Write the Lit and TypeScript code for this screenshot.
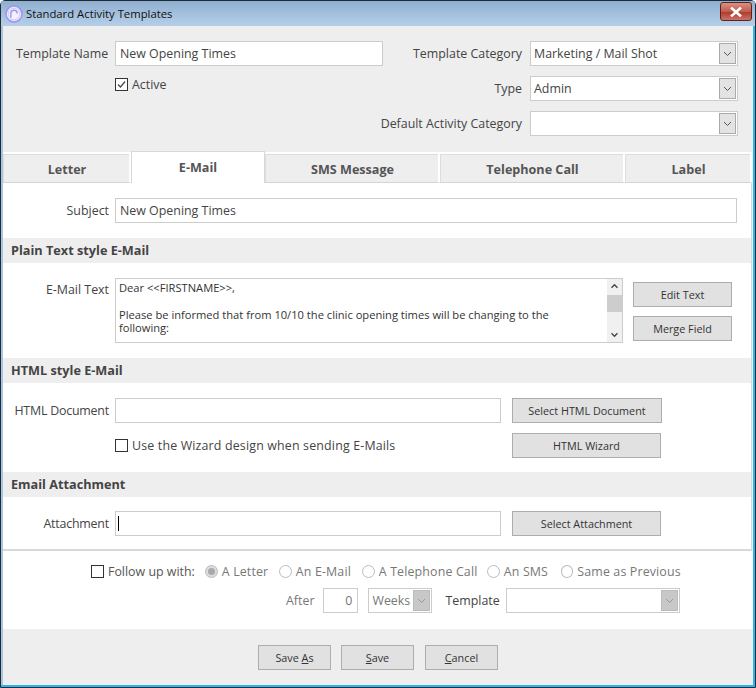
import { LitElement, html, css, svg } from 'lit';
import { customElement } from 'lit/decorators.js';

const CHEVRON = svg`<path d="M3 5l3.5 3.5L10 5" fill="none" stroke="currentColor" stroke-width="1"/>`;
const TABS = [
  { label: 'Letter', width: 128 },
  { label: 'E-Mail', width: 134, active: true },
  { label: 'SMS Message', width: 175 },
  { label: 'Telephone Call', width: 185 },
  { label: 'Label', width: 127 },
];
// width runs from one radio's dot to the next one
const RADIOS = [
  { label: 'A Letter', width: 74 },
  { label: 'An E-Mail', width: 83 },
  { label: 'A Telephone Call', width: 125 },
  { label: 'An SMS', width: 74 },
  { label: 'Same as Previous', width: 120 },
];

@customElement('app-root')
export class AppRoot extends LitElement {
  static override styles = css`
    :host {
      display: block;
      width: 756px;
      height: 688px;
      font-family: 'Open Sans', 'Noto Sans', sans-serif;
      font-size: 12.4px;
      color: #444;
      overflow: hidden;
    }
    * { box-sizing: border-box; }
    .window {
      width: 756px;
      height: 688px;
      display: flex;
      flex-direction: column;
      background:
        linear-gradient(#2bb5e8, #2bb5e8) bottom / 100% 2px no-repeat,
        linear-gradient(to right, #a8c6e4 50%, #2bb5e8 99%);
      border: 1px solid #1f2c36;
      border-radius: 5px 5px 0 0;
    }
    .titlebar {
      height: 25px;
      flex: none;
      display: flex;
      align-items: center;
      padding: 0 3px 0 4px;
      gap: 3px;
      font-size: 11.3px;
      color: #111;
      background: linear-gradient(#8fafd0, #b6cfe8);
    }
    .close {
      margin-left: auto;
      width: 32px;
      height: 19px;
      margin-top: -4px;
      border: 1px solid #5e2320;
      border-radius: 3px;
      background: linear-gradient(#d89187, #c25b4c 50%, #b13c2a 55%, #c9736a);
      display: flex;
      align-items: center;
      justify-content: center;
    }
    .client {
      flex: 1;
      margin: 0 2px 2px 2px;
      background: #eee;
      border-bottom: 1px solid #e6f3fa;
      display: flex;
      flex-direction: column;
      min-height: 0;
    }
    .top {
      height: 126px;
      flex: none;
      display: flex;
      padding: 15px 0 0 13px;
    }
    .top-left { width: 362px; }
    .top-right { display: flex; flex-direction: column; gap: 10px; }
    .row { display: flex; align-items: center; }
    .lbl { text-align: right; white-space: nowrap; }
    .top-left .lbl { width: 92px; margin-right: 7px; }
    .top-right .row { justify-content: flex-end; width: 360px; }
    .top-right .lbl { margin-right: 8px; }
    .active-row { margin: 10px 0 0 99px; }
    .input {
      height: 25px;
      flex: none;
      background: #fff;
      border: 1px solid #ccc;
      padding: 0 4px;
      display: flex;
      align-items: center;
      white-space: nowrap;
    }
    .select {
      height: 25px;
      width: 208px;
      flex: none;
      background: #fff;
      border: 1px solid #ccc;
      padding: 0 1px 0 3px;
      display: flex;
      align-items: center;
      justify-content: space-between;
    }
    .arrow {
      width: 17px;
      height: 21px;
      background: #e3e3e3;
      border: 1px solid #aaa;
      color: #555;
      display: flex;
      align-items: center;
      justify-content: center;
      flex: none;
    }
    .check {
      width: 13px;
      height: 13px;
      background: #fff;
      border: 1px solid #333;
      margin-right: 4px;
      flex: none;
      display: block;
    }
    .tabs { display: flex; height: 31px; flex: none; margin-right: 1px; }
    .tab {
      display: flex;
      align-items: center;
      justify-content: center;
      padding: 2px 0 0 2px;
      font-weight: 700;
      font-size: 12.6px;
      color: #555;
      border-top: 2px solid #fff;
      border-right: 2px solid #fff;
      border-bottom: 1px solid #d4d4d4;
      background: #eee;
      box-shadow: inset 1px 1px 0 #ddd;
    }
    .tab.active {
      background: #fff;
      margin-top: -1px;
      height: 32px;
      border: 1px solid #d8d8d8;
      border-bottom: 0;
      padding: 0 0 1px;
      box-shadow: none;
    }
    .panel {
      height: 368px;
      flex: none;
      background: #fff;
      border-bottom: 2px solid #d8d8d8;
      border-right: 1px solid #d8d8d8;
      padding-top: 15px;
      margin-right: 1px;
    }
    .panel .lbl { width: 106px; margin-right: 6px; flex: none; }
    .tight { letter-spacing: -.2px; }
    .section {
      height: 25px;
      background: #eee;
      padding: 0 0 2px 8px;
      display: flex;
      align-items: center;
      font-weight: 700;
      font-size: 12.7px;
      color: #444;
    }
    .text-row { display: flex; margin-top: 15px; }
    .text-row .lbl { padding-top: 3px; }
    .memo {
      width: 508px;
      height: 65px;
      flex: none;
      border: 1px solid #ccc;
      display: flex;
      font-size: 11.15px;
      line-height: 13.4px;
      color: #333;
    }
    .memo-text { flex: 1; padding: 2px 3px; white-space: pre-wrap; overflow: hidden; }
    .scroll {
      width: 15px;
      flex: none;
      background: #f0f0f0;
      display: flex;
      flex-direction: column;
      align-items: center;
      color: #444;
    }
    .scroll i { display: block; width: 15px; height: 17px; background: #cdcdcd; margin: 1px 0 auto; }
    .scroll svg { flex: none; margin: 1px 0; }
    .side { display: flex; flex-direction: column; gap: 9px; margin: 4px 0 0 10px; }
    .btn {
      height: 25px;
      background: #e1e1e1;
      border: 1px solid #adadad;
      display: flex;
      align-items: center;
      justify-content: center;
      font-size: 10.8px;
      color: #333;
      white-space: nowrap;
      flex: none;
    }
    .btn u { text-underline-offset: 1px; }
    .html-row { margin-top: 15px; }
    .attach-row { margin-top: 14px; }
    .wide { width: 386px; }
    .ml { margin-left: 11px; }
    .wiz { margin-top: 10px; height: 25px; }
    .wiz .spacer { width: 112px; flex: none; }
    .wiz .pad { width: 386px; flex: none; display: flex; align-items: center; letter-spacing: .17px; }
    .caret { width: 1px; height: 15px; background: #000; margin-left: -2px; }
    .follow {
      height: 78px;
      flex: none;
      background: #fff;
      padding-top: 12px;
    }
    .f1 { padding-left: 88px; height: 16px; color: #555; }
    .f1 .fu { margin-right: 10px; }
    .radio { display: flex; align-items: center; flex: none; color: #777; white-space: nowrap; letter-spacing: .15px; }
    .dot {
      width: 13px;
      height: 13px;
      border-radius: 50%;
      background: #fff;
      border: 1px solid #bbb;
      margin-right: 4px;
      display: flex;
      align-items: center;
      justify-content: center;
    }
    .dot.on { background: #ddd; }
    .dot.on::after { content: ''; width: 7px; height: 7px; border-radius: 50%; background: #a9a9a9; }
    .f2 { margin-top: 9px; padding-left: 283px; height: 25px; }
    .muted { color: #777; }
    .num {
      width: 35px;
      height: 25px;
      margin-left: 9px;
      border: 1px solid #ccc;
      background: #fff;
      color: #777;
      display: flex;
      align-items: center;
      justify-content: flex-end;
      padding-right: 5px;
    }
    .sel-off {
      height: 25px;
      margin-left: 10px;
      border: 1px solid #ccc;
      background: #fff;
      display: flex;
      align-items: center;
      justify-content: space-between;
      padding: 0 1px 0 3px;
      color: #777;
    }
    .sel-off .arrow { background: #c8c8c8; border-color: #bbb; color: #999; }
    .weeks { width: 64px; }
    .tpl-lbl { margin-left: 13px; }
    .tpl { width: 174px; margin-left: 6px; }
    .foot {
      flex: 1;
      display: flex;
      gap: 10px;
      padding: 16px 0 0 255px;
    }
    .foot .btn { width: 73px; }
    .foot .btn:last-child { margin-left: 1px; }
  `;

  private arrow() {
    return html`<span class="arrow"><svg width="13" height="13" viewBox="0 0 13 13">${CHEVRON}</svg></span>`;
  }

  private select(value: string) {
    return html`<div class="select"><span>${value}</span>${this.arrow()}</div>`;
  }

  private checkbox(checked = false) {
    return html`<svg class="check" viewBox="0 0 11 11" width="13" height="13">
      ${checked ? svg`<path d="M2 5.5l2.5 2.5L9 2.5" fill="none" stroke="#444" stroke-width="1.2"/>` : ''}
    </svg>`;
  }

  override render() {
    return html`
      <div class="window">
        <div class="titlebar">
          <svg width="18" height="18" viewBox="0 0 17 17">
            <circle cx="8.5" cy="8.5" r="7.5" fill="#f2efff" stroke="#9d94f0" stroke-width="1.4"/>
            <path d="M5.5 12V8a3 3 0 0 1 6 0" fill="none" stroke="#9d94f0" stroke-width="1.3"/>
            <circle cx="8.5" cy="8.5" r="5.5" fill="none" stroke="#c9c4f7" stroke-width=".8"/>
          </svg>
          <span>Standard Activity Templates</span>
          <div class="close">
            <svg width="12" height="10" viewBox="0 0 12 10">
              <path d="M2 1.5l8 7M10 1.5l-8 7" stroke="#fff" stroke-width="2.6" stroke-linecap="square"/>
            </svg>
          </div>
        </div>
        <div class="client">
          <div class="top">
            <div class="top-left">
              <div class="row">
                <span class="lbl">Template Name</span>
                <div class="input" style="width:268px">New Opening Times</div>
              </div>
              <div class="row active-row">${this.checkbox(true)}<span>Active</span></div>
            </div>
            <div class="top-right">
              <div class="row"><span class="lbl">Template Category</span>${this.select('Marketing / Mail Shot')}</div>
              <div class="row"><span class="lbl">Type</span>${this.select('Admin')}</div>
              <div class="row"><span class="lbl">Default Activity Category</span>${this.select('')}</div>
            </div>
          </div>
          <div class="tabs">
            ${TABS.map(t => html`<div class="tab ${t.active ? 'active' : ''}" style="width:${t.width}px">${t.label}</div>`)}
          </div>
          <div class="panel">
            <div class="row">
              <span class="lbl">Subject</span>
              <div class="input" style="width:622px">New Opening Times</div>
            </div>
            <div class="section" style="margin-top:15px">Plain Text style E-Mail</div>
            <div class="text-row">
              <span class="lbl">E-Mail Text</span>
              <div class="memo">
                <div class="memo-text">Dear &lt;&lt;FIRSTNAME&gt;&gt;,

Please be informed that from 10/10 the clinic opening times will be changing to the
following:</div>
                <div class="scroll">
                  <svg width="11" height="13" viewBox="0 0 13 13"><path d="M3 8l3.5-3.5L10 8" fill="none" stroke="currentColor" stroke-width="1.6"/></svg>
                  <i></i>
                  <svg width="11" height="13" viewBox="0 0 13 13"><path d="M3 5l3.5 3.5L10 5" fill="none" stroke="currentColor" stroke-width="1.6"/></svg>
                </div>
              </div>
              <div class="side">
                <div class="btn" style="width:99px">Edit Text</div>
                <div class="btn" style="width:99px">Merge Field</div>
              </div>
            </div>
            <div class="section" style="margin-top:15px">HTML style E-Mail</div>
            <div class="row html-row">
              <span class="lbl tight">HTML Document</span>
              <div class="input wide"></div>
              <div class="btn ml" style="width:150px">Select HTML Document</div>
            </div>
            <div class="row wiz">
              <span class="spacer"></span>
              <div class="pad">${this.checkbox()}<span>Use the Wizard design when sending E-Mails</span></div>
              <div class="btn ml" style="width:149px">HTML Wizard</div>
            </div>
            <div class="section" style="margin-top:14px">Email Attachment</div>
            <div class="row attach-row">
              <span class="lbl tight">Attachment</span>
              <div class="input wide"><span class="caret"></span></div>
              <div class="btn ml" style="width:149px">Select Attachment</div>
            </div>
          </div>
          <div class="follow">
            <div class="row f1">
              ${this.checkbox()}<span class="fu">Follow up with:</span>
              ${RADIOS.map((r, i) => html`<span class="radio" style="width:${r.width}px"><span class="dot ${i === 0 ? 'on' : ''}"></span>${r.label}</span>`)}
            </div>
            <div class="row f2">
              <span class="muted">After</span>
              <span class="num">0</span>
              <div class="sel-off weeks"><span>Weeks</span>${this.arrow()}</div>
              <span class="tpl-lbl">Template</span>
              <div class="sel-off tpl"><span></span>${this.arrow()}</div>
            </div>
          </div>
          <div class="foot">
            <div class="btn"><span>Save <u>A</u>s</span></div>
            <div class="btn"><span><u>S</u>ave</span></div>
            <div class="btn"><span><u>C</u>ancel</span></div>
          </div>
        </div>
      </div>
    `;
  }
}
